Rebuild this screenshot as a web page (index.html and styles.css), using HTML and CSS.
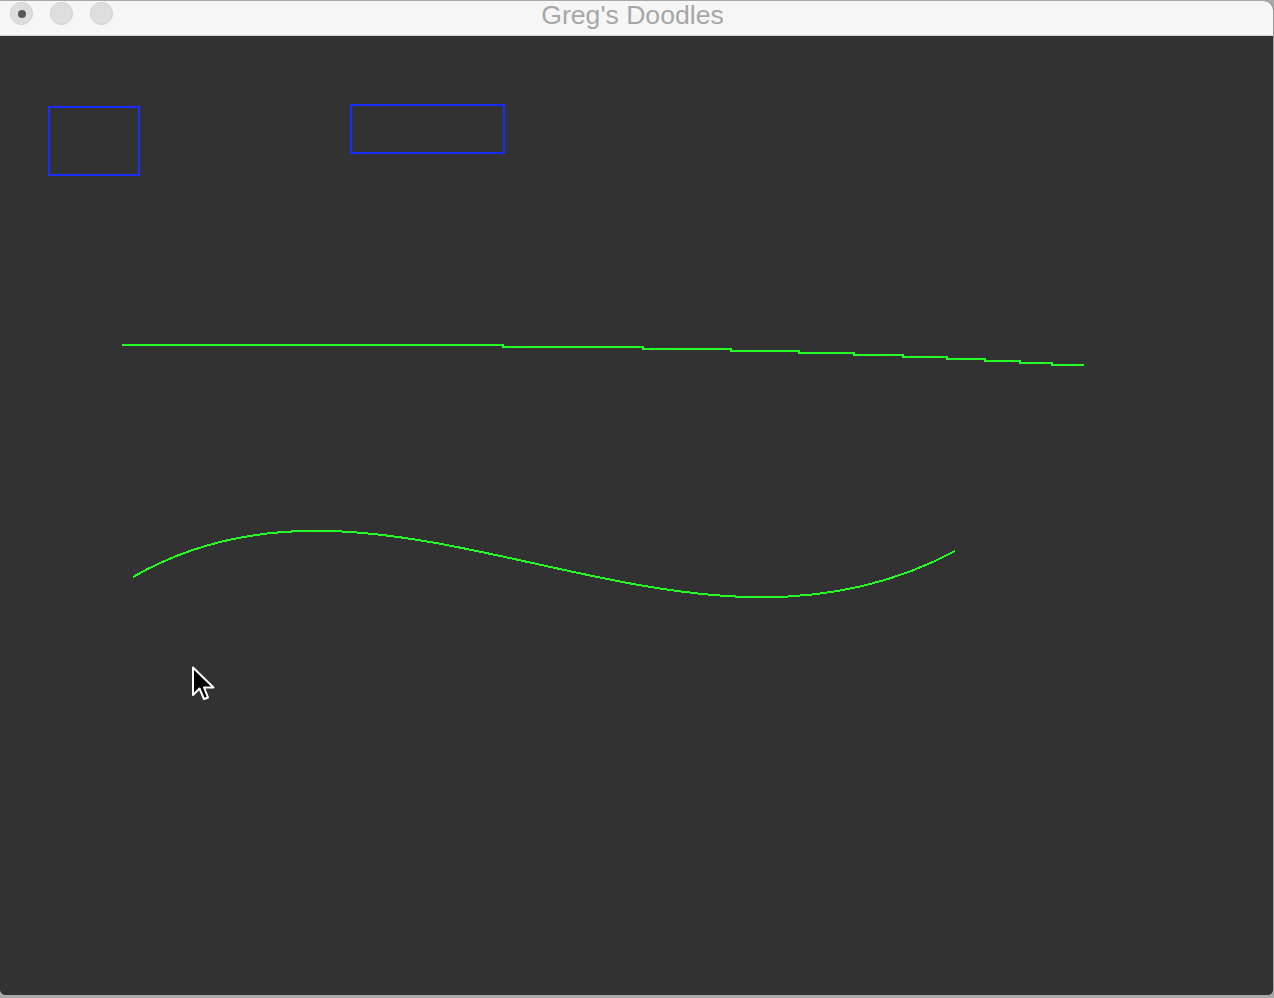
FILE: index.html
```html
<!DOCTYPE html>
<html>
<head>
<meta charset="utf-8">
<title>Greg's Doodles</title>
<link rel="stylesheet" href="styles.css">
</head>
<body>
<div class="window">
  <header class="titlebar">
    <div class="lights">
      <span class="light light-close"><span class="dot"></span></span>
      <span class="light"></span>
      <span class="light"></span>
    </div>
    <div class="title">Greg's Doodles</div>
    <div class="spacer"></div>
  </header>
  <main class="canvas">
    <svg class="drawing" width="1274" height="958" viewBox="0 36 1274 958" xmlns="http://www.w3.org/2000/svg">
      <g fill="none" stroke="#1a2cff" stroke-width="2" shape-rendering="crispEdges">
        <rect x="49" y="107" width="90" height="68"/>
        <rect x="351" y="105" width="153" height="48"/>
      </g>
      <g fill="none" stroke="#26ff26" stroke-width="2" shape-rendering="crispEdges">
        <path d="M122 345 H503 V347 H643 V349 H731 V351 H799 V353 H854 V355 H903 V357 H947 V359 H985 V361 H1020 V363 H1052 V365 H1084"/>
        <path d="M133 577 C391 428 678 700 955 551"/>
      </g>
      <path class="cursor" d="M193 667.5 L193 695 L199.5 688.5 L204 699 L208 697.5 L204 687.5 L213.5 687.5 Z" fill="#000" stroke="#fff" stroke-width="2" stroke-linejoin="round"/>
    </svg>
  </main>
</div>
</body>
</html>
```

FILE: styles.css
```css
html, body {
  margin: 0;
  padding: 0;
}
body {
  width: 1274px;
  height: 998px;
  overflow: hidden;
  background: #a9a9a9;
  font-family: "Liberation Sans", Arial, sans-serif;
}
.window {
  width: 1273px;
  height: 994px;
  display: flex;
  flex-direction: column;
  border-top: 1px solid #a8a8a8;
  border-right: 1px solid #9c9c9c;
  border-radius: 0 10px 6px 6px;
  overflow: hidden;
  background: #323232;
}
.titlebar {
  height: 34px;
  flex: 0 0 34px;
  background: #f6f6f6;
  border-bottom: 1px solid #d6d6d6;
  display: grid;
  grid-template-columns: 1fr auto 1fr;
  align-items: start;
}
.lights {
  display: flex;
  gap: 17px;
  padding: 1px 0 0 10px;
}
.light {
  width: 21px;
  height: 21px;
  border-radius: 50%;
  background: #dedede;
  border: 1px solid #d0d0d0;
  display: flex;
  align-items: center;
  justify-content: center;
}
.dot {
  width: 8px;
  height: 8px;
  border-radius: 50%;
  background: #565656;
}
.title {
  font-size: 26.6px;
  line-height: 29px;
  color: #a7a7a7;
  padding-right: 8px;
}
.canvas {
  flex: 1;
  background: #323232;
}
.drawing {
  display: block;
}
```
